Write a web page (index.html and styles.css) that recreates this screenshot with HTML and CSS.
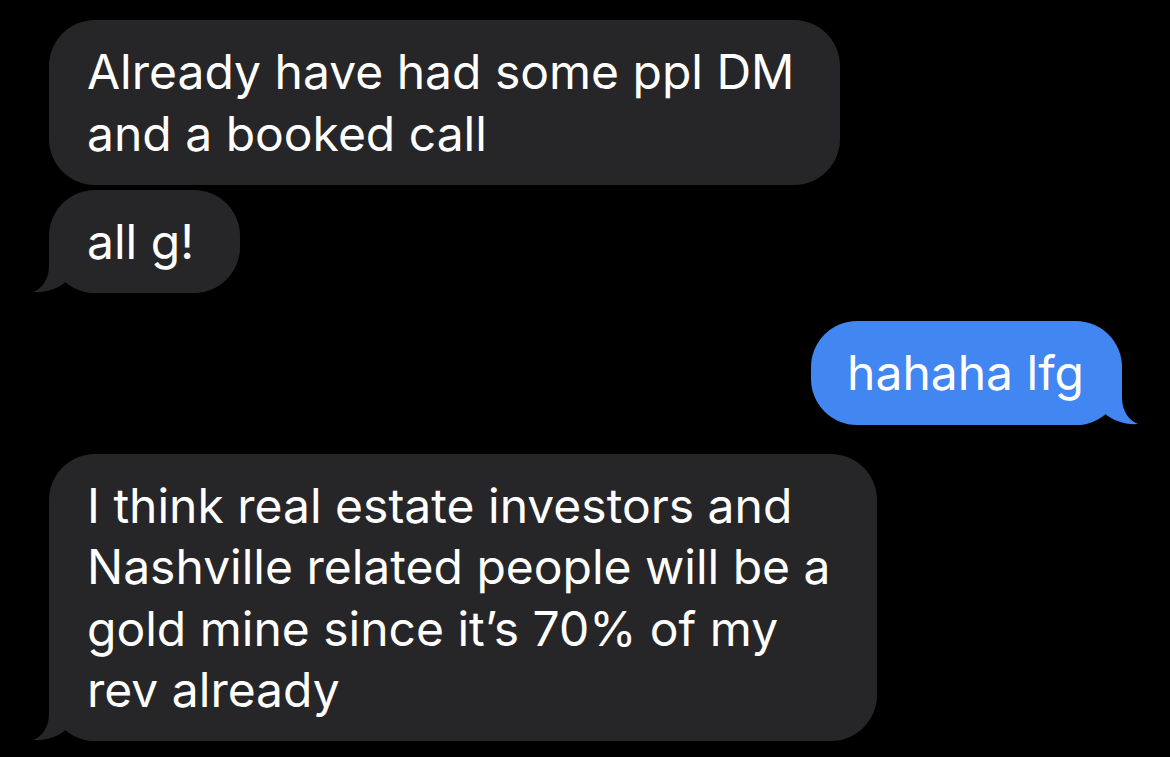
FILE: index.html
```html
<!DOCTYPE html>
<html lang="en">
<head>
  <meta charset="UTF-8" />
  <title>Messages</title>
  <link rel="stylesheet" href="styles.css">
</head>
<body>
  <main class="thread">
    <div class="bubble received">Already have had some ppl DM<br>and a booked call</div>

    <div class="bubble received tailed">all g!
      <svg class="tail" viewBox="0 0 60 45"><path d="M16,0 L16,18 C16,32 8,41 0,44 C12,45 25,41 34,33 C40,40 50,45 60,45 L60,0 Z"/></svg>
    </div>

    <div class="bubble sent tailed">hahaha lfg
      <svg class="tail" viewBox="0 0 60 45"><path d="M16,0 L16,18 C16,32 8,41 0,44 C12,45 25,41 34,33 C40,40 50,45 60,45 L60,0 Z"/></svg>
    </div>

    <div class="bubble received tailed">I think real estate investors and<br>Nashville related people will be a<br>gold mine since it’s 70% of my<br>rev already
      <svg class="tail" viewBox="0 0 60 45"><path d="M16,0 L16,18 C16,32 8,41 0,44 C12,45 25,41 34,33 C40,40 50,45 60,45 L60,0 Z"/></svg>
    </div>
  </main>
</body>
</html>
```

FILE: styles.css
```css
:root {
  --gray: #262628;
  --blue: #4286f1;
}

body {
  margin: 0;
  background: #000;
  color: #fff;
  font-family: Inter, "Noto Sans", sans-serif;
}

.thread {
  display: flex;
  flex-direction: column;
  padding: 20px 48px 20px 49px;
}

.bubble {
  position: relative;
  isolation: isolate;
  width: fit-content;
  font-size: 48px;
  line-height: 61.5px;
  padding: 21px 46px 20.5px 38px;
  border-radius: 46px;
  white-space: nowrap;
}

.received {
  background: var(--gray);
  align-self: flex-start;
  margin-bottom: 5.5px;
}

.received.tailed {
  margin-bottom: 28px;
}

.sent {
  background: var(--blue);
  align-self: flex-end;
  padding: 21px 38px 21.5px 36px;
  margin-bottom: 28.5px;
}

/* tail sits under the text but over the bubble fill */
.tail {
  position: absolute;
  z-index: -1;
  bottom: 0;
  width: 60px;
  height: 45px;
}

.received .tail {
  left: -16px;
  fill: var(--gray);
}

.sent .tail {
  right: -16px;
  transform: scaleX(-1);
  fill: var(--blue);
}
```
